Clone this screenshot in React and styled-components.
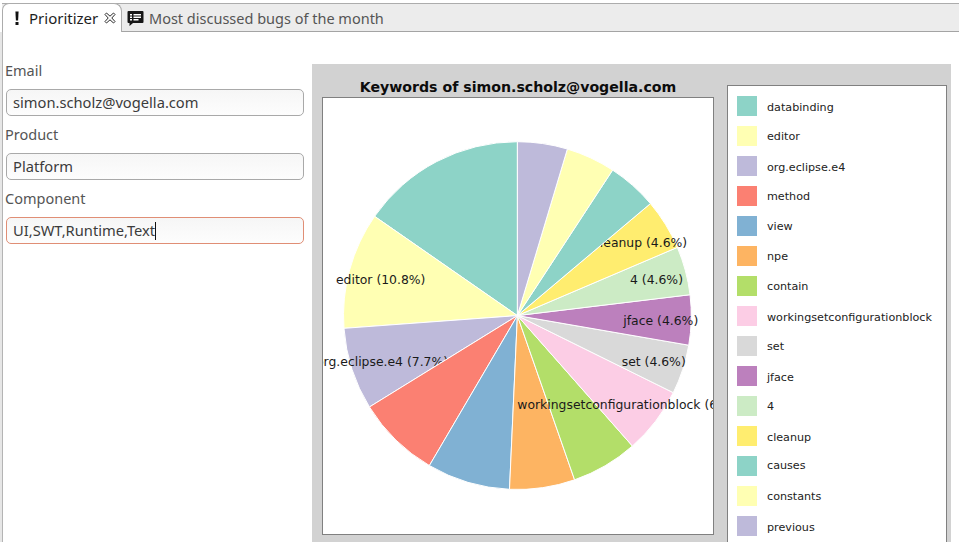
import React from "react";
import styled, { createGlobalStyle } from "styled-components";

const Global = createGlobalStyle`
  html, body { margin: 0; padding: 0; background: #fff; }
  body { font-family: "Noto Sans", "Open Sans", sans-serif; }
`;

const Frame = styled.div`
  width: 959px;
  height: 542px;
  overflow: hidden;
  display: flex;
  flex-direction: column;
  background: #fff;
`;

const TabBar = styled.div`
  margin: 3px 0 0 2px;
  height: 27px;
  display: flex;
  align-items: stretch;
  background: #ececec;
  border-top: 1px solid #acacac;
  border-bottom: 1px solid #a4a4a4;
  flex: none;
`;

const ActiveTab = styled.div`
  width: 120px;
  box-sizing: border-box;
  margin: -1px 0 -1px 0;
  display: flex;
  align-items: center;
  background: #fff;
  color: #1e1e1e;
  border: 1px solid #acacac;
  border-bottom: none;
  border-radius: 7px 8px 0 0;
  padding: 0 0 0 10px;
  font-size: 15px;
  flex: none;
`;

const IdleTab = styled.div`
  display: flex;
  align-items: center;
  padding-left: 5px;
  color: #555;
  font-size: 14.5px;
`;

const TabLabel = styled.span`
  margin-left: ${(p) => p.$gap}px;
  white-space: nowrap;
  line-height: 20px;
`;

const CloseSlot = styled.span`
  margin-left: 6px;
  display: flex;
`;

const Body = styled.div`
  flex: 1;
  margin-left: 2px;
  display: flex;
  align-items: flex-start;
  border-left: 1px solid #b4b4b4;
  box-shadow: -2px 0 0 #e6e6e6;
  min-height: 0;
`;

const Form = styled.div`
  width: 307px;
  flex: none;
  padding: 29px 0 0 2px;
  display: flex;
  flex-direction: column;
`;

const Field = styled.div`
  display: flex;
  flex-direction: column;
  gap: 10px;
  margin-bottom: 9px;
`;

const Label = styled.div`
  height: 18px;
  line-height: 18px;
  font-size: 14.5px;
  color: #555;
`;

const Input = styled.div`
  box-sizing: border-box;
  margin-left: 1px;
  width: 298px;
  height: 27px;
  padding: 0 6px 2px 6px;
  display: flex;
  align-items: center;
  border: 1px solid ${(p) => (p.$focused ? "#e08e75" : "#a9a9a9")};
  border-radius: 5px;
  background: linear-gradient(#f6f6f6, #fdfdfd);
  font-size: 14.7px;
  color: #3c3c3c;
  white-space: nowrap;
`;

const Caret = styled.span`
  display: inline-block;
  width: 1px;
  height: 18px;
  margin-top: 2px;
  background: #111;
`;

const ChartPanel = styled.div`
  margin-top: 32px;
  width: 639px;
  height: 520px;
  flex: none;
  box-sizing: border-box;
  padding: 14px 4px 0 10px;
  display: flex;
  align-items: flex-start;
  gap: 13px;
  background: #d2d2d2;
`;

const PlotColumn = styled.div`
  width: 392px;
  flex: none;
  display: flex;
  flex-direction: column;
`;

const ChartTitle = styled.div`
  height: 19px;
  line-height: 18px;
  text-align: center;
  font-family: "DejaVu Sans", sans-serif;
  font-weight: 700;
  font-size: 14.15px;
  color: #0c0c0c;
  white-space: nowrap;
`;

const Plot = styled.div`
  box-sizing: border-box;
  width: 392px;
  height: 438px;
  border: 1px solid #808080;
  background: #fff;
  overflow: hidden;
  svg { display: block; }
`;

const PieLabel = styled.text`
  font-family: "DejaVu Sans", sans-serif;
  font-size: 12.4px;
  fill: #1a1a1a;
`;

const Legend = styled.div`
  box-sizing: border-box;
  width: 220px;
  flex: none;
  margin-top: 7px;
  padding: 10px 9px;
  border: 1px solid #808080;
  background: #fff;
  display: flex;
  flex-direction: column;
`;

const LegendRow = styled.div`
  height: 30px;
  display: flex;
  align-items: flex-start;
  gap: 10px;
`;

const Swatch = styled.span`
  width: 20px;
  height: 20px;
  flex: none;
  background: ${(p) => p.$color};
`;

const LegendText = styled.span`
  font-family: "DejaVu Sans", sans-serif;
  font-size: 11.17px;
  line-height: 22px;
  margin-top: ${(p) => p.$drop || 0}px;
  color: #222;
  white-space: nowrap;
`;

const CX = 517.4;
const CY = 315.6;
const R = 173.9;

const slices = [
  { name: "databinding", color: "#8dd3c7", from: 304.8, to: 360, drop: 1 },
  { name: "editor", color: "#ffffb3", from: 265.8, to: 304.8, label: "editor (10.8%)", x: 336, y: 284 },
  { name: "org.eclipse.e4", color: "#bebada", from: 238.3, to: 265.8, label: "org.eclipse.e4 (7.7%)", x: 316, y: 366, drop: 1 },
  { name: "method", color: "#fb8072", from: 210.4, to: 238.3 },
  { name: "view", color: "#80b1d3", from: 182.6, to: 210.4 },
  { name: "npe", color: "#fdb462", from: 160.8, to: 182.6 },
  { name: "contain", color: "#b3de69", from: 138.6, to: 160.8 },
  { name: "workingsetconfigurationblock", color: "#fccde5", from: 116.3, to: 138.6, label: "workingsetconfigurationblock (6.2%)", x: 517.3, y: 409, drop: 1 },
  { name: "set", color: "#d9d9d9", from: 99.8, to: 116.3, label: "set (4.6%)", x: 621.7, y: 366 },
  { name: "jface", color: "#bc80bd", from: 83.1, to: 99.8, label: "jface (4.6%)", x: 623.3, y: 325, drop: 1 },
  { name: "4", color: "#ccebc5", from: 66.9, to: 83.1, label: "4 (4.6%)", x: 630, y: 284 },
  { name: "cleanup", color: "#ffed6f", from: 49.9, to: 66.9, label: "cleanup (4.6%)", x: 593, y: 247, drop: 1 },
  { name: "causes", color: "#8dd3c7", from: 33.2, to: 49.9, drop: -1 },
  { name: "constants", color: "#ffffb3", from: 16.7, to: 33.2 },
  { name: "previous", color: "#bebada", from: 0, to: 16.7, drop: 1 },
];

const point = (deg) => {
  const a = (deg * Math.PI) / 180;
  return [CX + R * Math.sin(a), CY - R * Math.cos(a)];
};

const slicePath = ({ from, to }) => {
  const [x1, y1] = point(from);
  const [x2, y2] = point(to);
  return `M${CX} ${CY}L${x1.toFixed(2)} ${y1.toFixed(2)}A${R} ${R} 0 0 1 ${x2.toFixed(2)} ${y2.toFixed(2)}Z`;
};

const BangIcon = () => (
  <svg width="8" height="16" viewBox="0 0 8 16">
    <path d="M2.4 1.5h3.2L5.1 10.5H2.9z" fill="#111" />
    <rect x="2.5" y="12" width="3" height="3" fill="#111" />
  </svg>
);

const CloseIcon = () => (
  <svg width="12" height="12" viewBox="0 0 12 12" fill="none">
    <path
      d="M1 2.5 2.5 1 6 4.2 9.5 1 11 2.5 7.8 6 11 9.5 9.5 11 6 7.8 2.5 11 1 9.5 4.2 6 1 2.5Z"
      stroke="#2a2a2a"
      strokeWidth="1"
      strokeLinejoin="round"
    />
  </svg>
);

const CommentIcon = () => (
  <svg width="17" height="16" viewBox="0 0 17 16">
    <path d="M1.5 1h14a1 1 0 0 1 1 1v10a1 1 0 0 1-1 1H6l-3.5 3v-3h-1a1 1 0 0 1-1-1V2a1 1 0 0 1 1-1z" fill="#161616" />
    <path d="M3 4h2v1.4H3zM6.5 4h7.5v1.4H6.5zM3 6.5h2v1.4H3zM6.5 6.5h7.5v1.4H6.5zM3 9h2v1.4H3zM6.5 9h5v1.4h-5z" fill="#fff" />
  </svg>
);

export default function App() {
  return (
    <Frame>
      <Global />
      <TabBar>
        <ActiveTab>
          <BangIcon />
          <TabLabel $gap={8}>Prioritizer</TabLabel>
          <CloseSlot>
            <CloseIcon />
          </CloseSlot>
        </ActiveTab>
        <IdleTab>
          <CommentIcon />
          <TabLabel $gap={5}>Most discussed bugs of the month</TabLabel>
        </IdleTab>
      </TabBar>
      <Body>
        <Form>
          <Field>
            <Label>Email</Label>
            <Input>simon.scholz@vogella.com</Input>
          </Field>
          <Field>
            <Label>Product</Label>
            <Input>Platform</Input>
          </Field>
          <Field>
            <Label>Component</Label>
            <Input $focused>
              UI,SWT,Runtime,Text
              <Caret />
            </Input>
          </Field>
        </Form>
        <ChartPanel>
          <PlotColumn>
            <ChartTitle>Keywords of simon.scholz@vogella.com</ChartTitle>
            <Plot>
              <svg width="390" height="436" viewBox="323 98 390 436">
                {slices.map((s) => (
                  <g key={s.name}>
                    <path d={slicePath(s)} fill={s.color} stroke="#fff" strokeWidth="1" />
                    {s.label && (
                      <PieLabel x={s.x} y={s.y}>
                        {s.label}
                      </PieLabel>
                    )}
                  </g>
                ))}
              </svg>
            </Plot>
          </PlotColumn>
          <Legend>
            {slices.map((s) => (
              <LegendRow key={s.name}>
                <Swatch $color={s.color} />
                <LegendText $drop={s.drop}>{s.name}</LegendText>
              </LegendRow>
            ))}
          </Legend>
        </ChartPanel>
      </Body>
    </Frame>
  );
}
